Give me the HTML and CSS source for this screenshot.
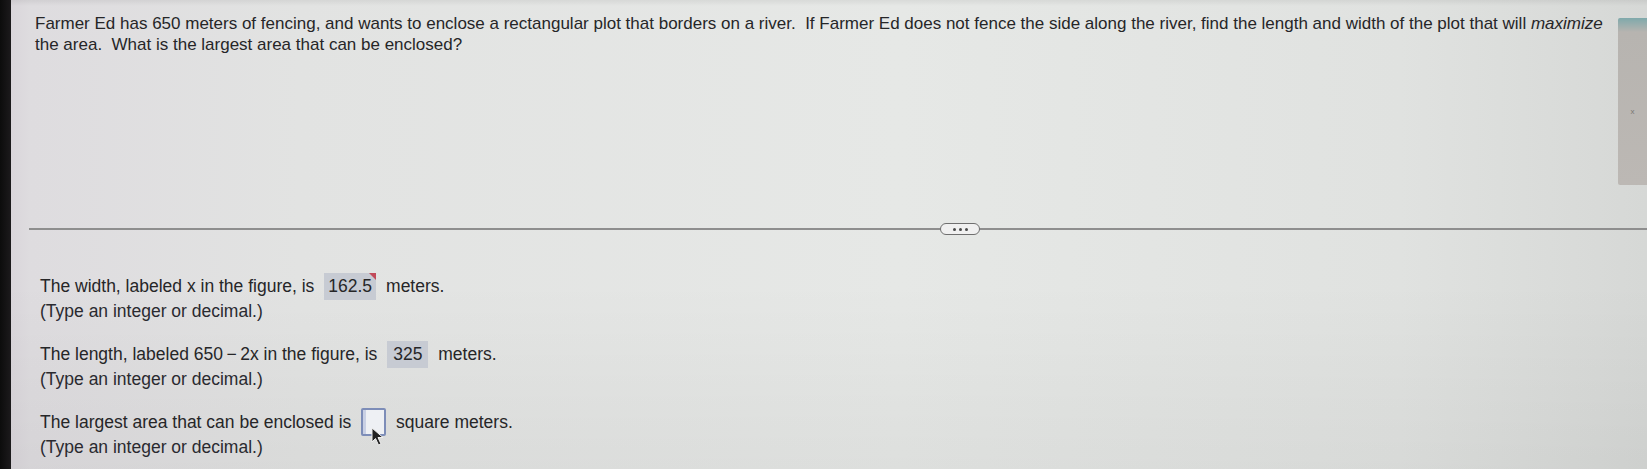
FILE: index.html
```html
<!DOCTYPE html>
<html lang="en">
<head>
<meta charset="utf-8">
<title>Farmer Ed fencing problem</title>
<link rel="stylesheet" href="styles.css">
</head>
<body>
<div class="screen">
  <div class="bezel"></div>
  <div class="page">
    <div class="top">
      <p class="question">Farmer Ed has 650 meters of fencing, and wants to enclose a rectangular plot that borders on a river.&nbsp; If Farmer Ed does not fence the side along the river, find the length and width of the plot that will <i>maximize</i> the area.&nbsp; What is the largest area that can be enclosed?</p>
      <div class="side"><div class="side-panel"><span class="side-mark">x</span></div></div>
    </div>
    <div class="divider">
      <span class="handle"><span class="dot"></span><span class="dot"></span><span class="dot"></span></span>
    </div>
    <div class="answers">
      <div class="item">
        <div class="row">The width, labeled x in the figure, is <span class="ans filled wide">162.5<span class="flag"></span></span> meters.</div>
        <div class="hint">(Type an integer or decimal.)</div>
      </div>
      <div class="item">
        <div class="row">The length, labeled 650&thinsp;&minus;&thinsp;2x in the figure, is <span class="ans filled">325</span> meters.</div>
        <div class="hint">(Type an integer or decimal.)</div>
      </div>
      <div class="item">
        <div class="row">The largest area that can be enclosed is <span class="ans empty"><svg class="cursor" width="14" height="20" viewBox="0 0 14 20"><path d="M1 1 L1 15 L4.5 11.5 L7.5 18 L10 17 L7 10.5 L12 10.5 Z" fill="#222" stroke="#eee" stroke-width="1"/></svg></span> square meters.</div>
        <div class="hint">(Type an integer or decimal.)</div>
      </div>
    </div>
  </div>
</div>
</body>
</html>
```
FILE: styles.css
```css
html, body {
  margin: 0;
  padding: 0;
  height: 100%;
  overflow: hidden;
}
body {
  font-family: "Liberation Sans", Arial, sans-serif;
  color: #262628;
  background: #dfe0df;
}
.screen {
  display: flex;
  width: 1647px;
  height: 469px;
  background:
    linear-gradient(to bottom, rgba(0,0,0,0.06) 0, rgba(0,0,0,0) 6px, rgba(0,0,0,0) 60%, rgba(0,0,0,0.04) 100%),
    linear-gradient(to right, #d7d2d8 0, #dedcdf 30px, #e2e3e2 300px, #e6e8e6 900px, #e0e2e0 1400px, #d6d8d6 1647px);
}
.bezel {
  width: 11px;
  flex: none;
  background: linear-gradient(to right, #0c0c0c, #1c1a1c);
}
.page {
  flex: 1;
  display: flex;
  flex-direction: column;
}
.top {
  display: flex;
  height: 223px;
}
.question {
  flex: 1;
  margin: 0;
  padding: 13px 10px 0 24px;
  font-size: 17px;
  line-height: 21px;
}
.side {
  width: 29px;
  flex: none;
  padding-top: 18px;
}
.side-panel {
  height: 167px;
  background: linear-gradient(to bottom, #7fa9ab 0, #b7b4b0 14px, #bcb8b4 100%);
  display: flex;
  align-items: center;
  justify-content: center;
  border-radius: 2px 0 0 2px;
}
.side-mark {
  font-size: 8px;
  color: #7a7672;
  margin-top: 20px;
}
.divider {
  margin-left: 18px;
  height: 12px;
  display: flex;
  align-items: center;
  background: linear-gradient(#8e8e8e, #8e8e8e) center / 100% 2px no-repeat;
  padding-left: 911px;
}
.handle {
  width: 38px;
  height: 10px;
  border: 1.5px solid #6f6f6f;
  border-radius: 6px;
  background: #f0f0f0;
  display: flex;
  align-items: center;
  justify-content: center;
  gap: 3px;
}
.dot {
  width: 3px;
  height: 3px;
  border-radius: 50%;
  background: #4a4a4a;
}
.answers {
  padding: 37px 0 0 29px;
  display: flex;
  flex-direction: column;
  gap: 18px;
  font-size: 17.5px;
}
.row {
  height: 28px;
  display: flex;
  align-items: center;
  white-space: pre;
}
.hint {
  line-height: 22px;
  height: 22px;
  color: #2a2a30;
}
.ans {
  position: relative;
  display: inline-flex;
  align-items: center;
  justify-content: center;
  height: 28px;
  margin: 0 5px;
}
.filled {
  background: #c7cbd3;
  padding: 0 6px;
  height: 27px;
}
.wide {
  width: 40px;
}
.flag {
  position: absolute;
  top: 0;
  right: 0;
  width: 0;
  height: 0;
  border-top: 7px solid #c24a5a;
  border-left: 7px solid transparent;
}
.empty {
  width: 21px;
  height: 24px;
  border: 2px solid #7d8db8;
  background: linear-gradient(to right, #c9d0e4 0, #c9d0e4 3px, #eef0f4 3px);
  border-radius: 2px;
}
.cursor {
  position: absolute;
  left: 8px;
  top: 17px;
}
```
